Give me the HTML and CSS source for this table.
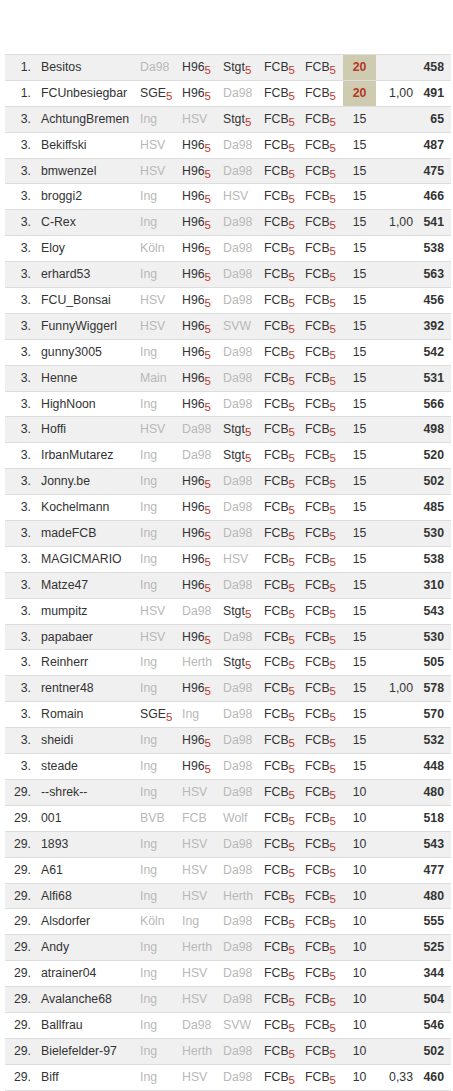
FILE: index.html
```html
<!DOCTYPE html>
<html>
<head>
<meta charset="utf-8">
<link rel="stylesheet" href="styles.css">
</head>
<body>
<div class="board">
<div class="r"><span class="rk">1.</span><span class="nm">Besitos</span><span class="t g">Da98</span><span class="t">H96<sub>5</sub></span><span class="t">Stgt<sub>5</sub></span><span class="t">FCB<sub>5</sub></span><span class="t">FCB<sub>5</sub></span><span class="pt hl">20</span><span class="bo"></span><span class="tot">458</span></div>
<div class="r"><span class="rk">1.</span><span class="nm">FCUnbesiegbar</span><span class="t">SGE<sub>5</sub></span><span class="t">H96<sub>5</sub></span><span class="t g">Da98</span><span class="t">FCB<sub>5</sub></span><span class="t">FCB<sub>5</sub></span><span class="pt hl">20</span><span class="bo">1,00</span><span class="tot">491</span></div>
<div class="r"><span class="rk">3.</span><span class="nm">AchtungBremen</span><span class="t g">Ing</span><span class="t g">HSV</span><span class="t">Stgt<sub>5</sub></span><span class="t">FCB<sub>5</sub></span><span class="t">FCB<sub>5</sub></span><span class="pt">15</span><span class="bo"></span><span class="tot">65</span></div>
<div class="r"><span class="rk">3.</span><span class="nm">Bekiffski</span><span class="t g">HSV</span><span class="t">H96<sub>5</sub></span><span class="t g">Da98</span><span class="t">FCB<sub>5</sub></span><span class="t">FCB<sub>5</sub></span><span class="pt">15</span><span class="bo"></span><span class="tot">487</span></div>
<div class="r"><span class="rk">3.</span><span class="nm">bmwenzel</span><span class="t g">HSV</span><span class="t">H96<sub>5</sub></span><span class="t g">Da98</span><span class="t">FCB<sub>5</sub></span><span class="t">FCB<sub>5</sub></span><span class="pt">15</span><span class="bo"></span><span class="tot">475</span></div>
<div class="r"><span class="rk">3.</span><span class="nm">broggi2</span><span class="t g">Ing</span><span class="t">H96<sub>5</sub></span><span class="t g">HSV</span><span class="t">FCB<sub>5</sub></span><span class="t">FCB<sub>5</sub></span><span class="pt">15</span><span class="bo"></span><span class="tot">466</span></div>
<div class="r"><span class="rk">3.</span><span class="nm">C-Rex</span><span class="t g">Ing</span><span class="t">H96<sub>5</sub></span><span class="t g">Da98</span><span class="t">FCB<sub>5</sub></span><span class="t">FCB<sub>5</sub></span><span class="pt">15</span><span class="bo">1,00</span><span class="tot">541</span></div>
<div class="r"><span class="rk">3.</span><span class="nm">Eloy</span><span class="t g">Köln</span><span class="t">H96<sub>5</sub></span><span class="t g">Da98</span><span class="t">FCB<sub>5</sub></span><span class="t">FCB<sub>5</sub></span><span class="pt">15</span><span class="bo"></span><span class="tot">538</span></div>
<div class="r"><span class="rk">3.</span><span class="nm">erhard53</span><span class="t g">Ing</span><span class="t">H96<sub>5</sub></span><span class="t g">Da98</span><span class="t">FCB<sub>5</sub></span><span class="t">FCB<sub>5</sub></span><span class="pt">15</span><span class="bo"></span><span class="tot">563</span></div>
<div class="r"><span class="rk">3.</span><span class="nm">FCU_Bonsai</span><span class="t g">HSV</span><span class="t">H96<sub>5</sub></span><span class="t g">Da98</span><span class="t">FCB<sub>5</sub></span><span class="t">FCB<sub>5</sub></span><span class="pt">15</span><span class="bo"></span><span class="tot">456</span></div>
<div class="r"><span class="rk">3.</span><span class="nm">FunnyWiggerl</span><span class="t g">HSV</span><span class="t">H96<sub>5</sub></span><span class="t g">SVW</span><span class="t">FCB<sub>5</sub></span><span class="t">FCB<sub>5</sub></span><span class="pt">15</span><span class="bo"></span><span class="tot">392</span></div>
<div class="r"><span class="rk">3.</span><span class="nm">gunny3005</span><span class="t g">Ing</span><span class="t">H96<sub>5</sub></span><span class="t g">Da98</span><span class="t">FCB<sub>5</sub></span><span class="t">FCB<sub>5</sub></span><span class="pt">15</span><span class="bo"></span><span class="tot">542</span></div>
<div class="r"><span class="rk">3.</span><span class="nm">Henne</span><span class="t g">Main</span><span class="t">H96<sub>5</sub></span><span class="t g">Da98</span><span class="t">FCB<sub>5</sub></span><span class="t">FCB<sub>5</sub></span><span class="pt">15</span><span class="bo"></span><span class="tot">531</span></div>
<div class="r"><span class="rk">3.</span><span class="nm">HighNoon</span><span class="t g">Ing</span><span class="t">H96<sub>5</sub></span><span class="t g">Da98</span><span class="t">FCB<sub>5</sub></span><span class="t">FCB<sub>5</sub></span><span class="pt">15</span><span class="bo"></span><span class="tot">566</span></div>
<div class="r"><span class="rk">3.</span><span class="nm">Hoffi</span><span class="t g">HSV</span><span class="t g">Da98</span><span class="t">Stgt<sub>5</sub></span><span class="t">FCB<sub>5</sub></span><span class="t">FCB<sub>5</sub></span><span class="pt">15</span><span class="bo"></span><span class="tot">498</span></div>
<div class="r"><span class="rk">3.</span><span class="nm">IrbanMutarez</span><span class="t g">Ing</span><span class="t g">Da98</span><span class="t">Stgt<sub>5</sub></span><span class="t">FCB<sub>5</sub></span><span class="t">FCB<sub>5</sub></span><span class="pt">15</span><span class="bo"></span><span class="tot">520</span></div>
<div class="r"><span class="rk">3.</span><span class="nm">Jonny.be</span><span class="t g">Ing</span><span class="t">H96<sub>5</sub></span><span class="t g">Da98</span><span class="t">FCB<sub>5</sub></span><span class="t">FCB<sub>5</sub></span><span class="pt">15</span><span class="bo"></span><span class="tot">502</span></div>
<div class="r"><span class="rk">3.</span><span class="nm">Kochelmann</span><span class="t g">Ing</span><span class="t">H96<sub>5</sub></span><span class="t g">Da98</span><span class="t">FCB<sub>5</sub></span><span class="t">FCB<sub>5</sub></span><span class="pt">15</span><span class="bo"></span><span class="tot">485</span></div>
<div class="r"><span class="rk">3.</span><span class="nm">madeFCB</span><span class="t g">Ing</span><span class="t">H96<sub>5</sub></span><span class="t g">Da98</span><span class="t">FCB<sub>5</sub></span><span class="t">FCB<sub>5</sub></span><span class="pt">15</span><span class="bo"></span><span class="tot">530</span></div>
<div class="r"><span class="rk">3.</span><span class="nm">MAGICMARIO</span><span class="t g">Ing</span><span class="t">H96<sub>5</sub></span><span class="t g">HSV</span><span class="t">FCB<sub>5</sub></span><span class="t">FCB<sub>5</sub></span><span class="pt">15</span><span class="bo"></span><span class="tot">538</span></div>
<div class="r"><span class="rk">3.</span><span class="nm">Matze47</span><span class="t g">Ing</span><span class="t">H96<sub>5</sub></span><span class="t g">Da98</span><span class="t">FCB<sub>5</sub></span><span class="t">FCB<sub>5</sub></span><span class="pt">15</span><span class="bo"></span><span class="tot">310</span></div>
<div class="r"><span class="rk">3.</span><span class="nm">mumpitz</span><span class="t g">HSV</span><span class="t g">Da98</span><span class="t">Stgt<sub>5</sub></span><span class="t">FCB<sub>5</sub></span><span class="t">FCB<sub>5</sub></span><span class="pt">15</span><span class="bo"></span><span class="tot">543</span></div>
<div class="r"><span class="rk">3.</span><span class="nm">papabaer</span><span class="t g">HSV</span><span class="t">H96<sub>5</sub></span><span class="t g">Da98</span><span class="t">FCB<sub>5</sub></span><span class="t">FCB<sub>5</sub></span><span class="pt">15</span><span class="bo"></span><span class="tot">530</span></div>
<div class="r"><span class="rk">3.</span><span class="nm">Reinherr</span><span class="t g">Ing</span><span class="t g">Herth</span><span class="t">Stgt<sub>5</sub></span><span class="t">FCB<sub>5</sub></span><span class="t">FCB<sub>5</sub></span><span class="pt">15</span><span class="bo"></span><span class="tot">505</span></div>
<div class="r"><span class="rk">3.</span><span class="nm">rentner48</span><span class="t g">Ing</span><span class="t">H96<sub>5</sub></span><span class="t g">Da98</span><span class="t">FCB<sub>5</sub></span><span class="t">FCB<sub>5</sub></span><span class="pt">15</span><span class="bo">1,00</span><span class="tot">578</span></div>
<div class="r"><span class="rk">3.</span><span class="nm">Romain</span><span class="t">SGE<sub>5</sub></span><span class="t g">Ing</span><span class="t g">Da98</span><span class="t">FCB<sub>5</sub></span><span class="t">FCB<sub>5</sub></span><span class="pt">15</span><span class="bo"></span><span class="tot">570</span></div>
<div class="r"><span class="rk">3.</span><span class="nm">sheidi</span><span class="t g">Ing</span><span class="t">H96<sub>5</sub></span><span class="t g">Da98</span><span class="t">FCB<sub>5</sub></span><span class="t">FCB<sub>5</sub></span><span class="pt">15</span><span class="bo"></span><span class="tot">532</span></div>
<div class="r"><span class="rk">3.</span><span class="nm">steade</span><span class="t g">Ing</span><span class="t">H96<sub>5</sub></span><span class="t g">Da98</span><span class="t">FCB<sub>5</sub></span><span class="t">FCB<sub>5</sub></span><span class="pt">15</span><span class="bo"></span><span class="tot">448</span></div>
<div class="r"><span class="rk">29.</span><span class="nm">--shrek--</span><span class="t g">Ing</span><span class="t g">HSV</span><span class="t g">Da98</span><span class="t">FCB<sub>5</sub></span><span class="t">FCB<sub>5</sub></span><span class="pt">10</span><span class="bo"></span><span class="tot">480</span></div>
<div class="r"><span class="rk">29.</span><span class="nm">001</span><span class="t g">BVB</span><span class="t g">FCB</span><span class="t g">Wolf</span><span class="t">FCB<sub>5</sub></span><span class="t">FCB<sub>5</sub></span><span class="pt">10</span><span class="bo"></span><span class="tot">518</span></div>
<div class="r"><span class="rk">29.</span><span class="nm">1893</span><span class="t g">Ing</span><span class="t g">HSV</span><span class="t g">Da98</span><span class="t">FCB<sub>5</sub></span><span class="t">FCB<sub>5</sub></span><span class="pt">10</span><span class="bo"></span><span class="tot">543</span></div>
<div class="r"><span class="rk">29.</span><span class="nm">A61</span><span class="t g">Ing</span><span class="t g">HSV</span><span class="t g">Da98</span><span class="t">FCB<sub>5</sub></span><span class="t">FCB<sub>5</sub></span><span class="pt">10</span><span class="bo"></span><span class="tot">477</span></div>
<div class="r"><span class="rk">29.</span><span class="nm">Alfi68</span><span class="t g">Ing</span><span class="t g">HSV</span><span class="t g">Herth</span><span class="t">FCB<sub>5</sub></span><span class="t">FCB<sub>5</sub></span><span class="pt">10</span><span class="bo"></span><span class="tot">480</span></div>
<div class="r"><span class="rk">29.</span><span class="nm">Alsdorfer</span><span class="t g">Köln</span><span class="t g">Ing</span><span class="t g">Da98</span><span class="t">FCB<sub>5</sub></span><span class="t">FCB<sub>5</sub></span><span class="pt">10</span><span class="bo"></span><span class="tot">555</span></div>
<div class="r"><span class="rk">29.</span><span class="nm">Andy</span><span class="t g">Ing</span><span class="t g">Herth</span><span class="t g">Da98</span><span class="t">FCB<sub>5</sub></span><span class="t">FCB<sub>5</sub></span><span class="pt">10</span><span class="bo"></span><span class="tot">525</span></div>
<div class="r"><span class="rk">29.</span><span class="nm">atrainer04</span><span class="t g">Ing</span><span class="t g">HSV</span><span class="t g">Da98</span><span class="t">FCB<sub>5</sub></span><span class="t">FCB<sub>5</sub></span><span class="pt">10</span><span class="bo"></span><span class="tot">344</span></div>
<div class="r"><span class="rk">29.</span><span class="nm">Avalanche68</span><span class="t g">Ing</span><span class="t g">HSV</span><span class="t g">Da98</span><span class="t">FCB<sub>5</sub></span><span class="t">FCB<sub>5</sub></span><span class="pt">10</span><span class="bo"></span><span class="tot">504</span></div>
<div class="r"><span class="rk">29.</span><span class="nm">Ballfrau</span><span class="t g">Ing</span><span class="t g">Da98</span><span class="t g">SVW</span><span class="t">FCB<sub>5</sub></span><span class="t">FCB<sub>5</sub></span><span class="pt">10</span><span class="bo"></span><span class="tot">546</span></div>
<div class="r"><span class="rk">29.</span><span class="nm">Bielefelder-97</span><span class="t g">Ing</span><span class="t g">Herth</span><span class="t g">Da98</span><span class="t">FCB<sub>5</sub></span><span class="t">FCB<sub>5</sub></span><span class="pt">10</span><span class="bo"></span><span class="tot">502</span></div>
<div class="r"><span class="rk">29.</span><span class="nm">Biff</span><span class="t g">Ing</span><span class="t g">HSV</span><span class="t g">Da98</span><span class="t">FCB<sub>5</sub></span><span class="t">FCB<sub>5</sub></span><span class="pt">10</span><span class="bo">0,33</span><span class="tot">460</span></div>
</div>
</body>
</html>
```

FILE: styles.css
```css
html, body {
  margin: 0;
  padding: 0;
  background: #ffffff;
}

body {
  font-family: "Liberation Sans", Arial, sans-serif;
  font-size: 12.3px;
  color: #333333;
}

.board {
  margin: 54px 2px 0 5px;
  border-top: 1px solid #dddddd;
}

.r {
  display: grid;
  grid-template-columns: 26px 109px 42px 41px 41px 41px 38px 33px 37px 31px 7px;
  height: 24.9px;
  border-bottom: 1px solid #dddddd;
  background: #ffffff;
  white-space: nowrap;
}

.r > span {
  padding-top: 1px;
  line-height: 23.9px;
}

.r:nth-child(odd) {
  background: #f0f0f0;
}

.rk {
  text-align: right;
}

.nm {
  padding-left: 10px;
}

.t.g {
  color: #b8b8b8;
}

sub {
  font-size: 11.5px;
  line-height: 0;
  vertical-align: -3px;
  color: #c0392b;
}

.pt {
  text-align: center;
}

.pt.hl {
  background: #cfcbb1;
  color: #b13a26;
  font-weight: bold;
}

.bo {
  text-align: right;
}

.tot {
  grid-column: 10;
  text-align: right;
  font-weight: bold;
}
```
